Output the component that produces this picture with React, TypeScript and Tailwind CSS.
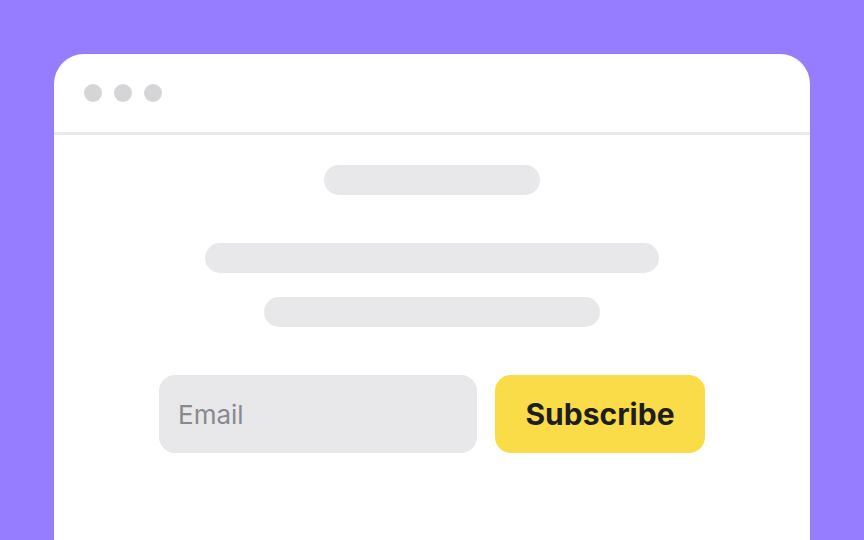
export default function App() {
  return (
    <div className="h-[540px] w-[864px] overflow-hidden bg-[#967cff] pl-[54px] pt-[54px] font-['Inter',sans-serif]">
      <div className="h-[520px] w-[756px] rounded-t-[30px] bg-white">
        <div className="flex h-[81px] items-center gap-3 border-b-[3px] border-[#e9e9eb] pl-[30px]">
          <span className="h-[18px] w-[18px] rounded-full bg-[#d5d5d7]" />
          <span className="h-[18px] w-[18px] rounded-full bg-[#d5d5d7]" />
          <span className="h-[18px] w-[18px] rounded-full bg-[#d5d5d7]" />
        </div>
        <div className="flex flex-col items-center pt-[30px]">
          <div className="h-[30px] w-[216px] rounded-full bg-[#e8e8ea]" />
          <div className="mt-[48px] h-[30px] w-[454px] rounded-full bg-[#e8e8ea]" />
          <div className="mt-[24px] h-[30px] w-[336px] rounded-full bg-[#e8e8ea]" />
          <form className="mt-[48px] flex gap-[18px]">
            <input
              type="email"
              placeholder="Email"
              className="h-[78px] w-[318px] rounded-[16px] bg-[#e8e8ea] px-[19px] text-[26px] text-[#1f1f23] outline-none placeholder:text-[#89898d]"
            />
            <button
              type="button"
              className="h-[78px] w-[210px] rounded-[16px] bg-[#f9dc48] text-[30px] font-bold text-[#1e1e22]"
            >
              Subscribe
            </button>
          </form>
        </div>
      </div>
    </div>
  );
}
